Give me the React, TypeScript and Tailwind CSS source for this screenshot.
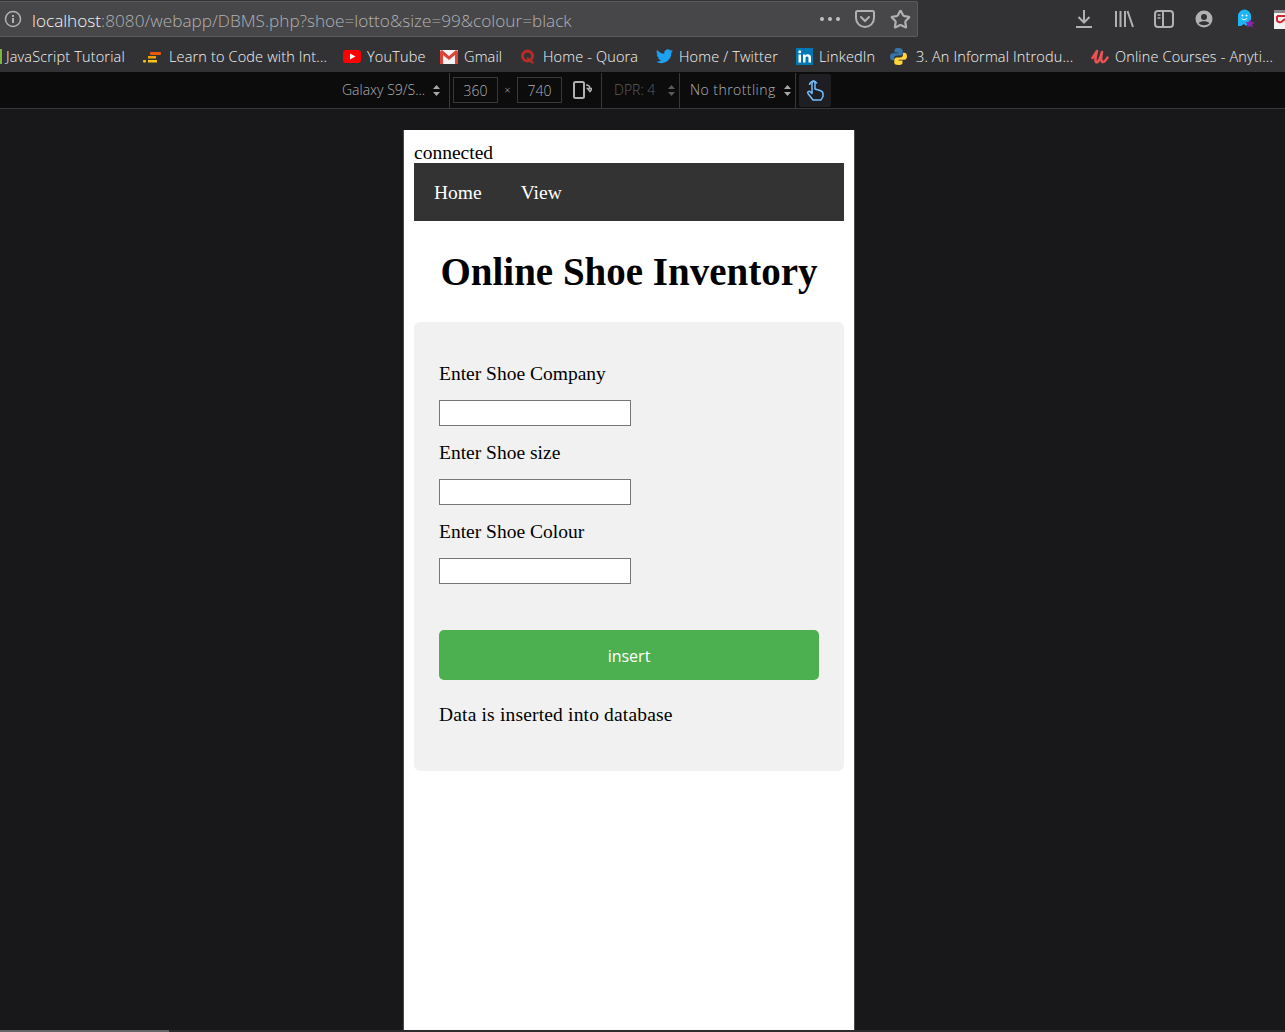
import { Star } from "lucide-react";

const uiFont = "font-['Open_Sans','Noto_Sans',sans-serif]";

const Stepper = ({ dim = false }: { dim?: boolean }) => (
  <svg width="7" height="11" viewBox="0 0 7 11" className={`shrink-0 ${dim ? "text-[#5a5a5c]" : "text-[#a8a8aa]"}`}>
    <path d="M3.500 0 7 4H0z M3.500 11 0 7h7z" fill="currentColor" />
  </svg>
);

const Favicon = ({ name }: { name: string }) => {
  if (name === "code")
    return (
      <svg width="18" height="12" viewBox="0 0 18 12">
        <rect x="7" y="1" width="11" height="3" rx="1" fill="#e8590c" />
        <rect x="5" y="5" width="8" height="2.500" fill="#f59f00" />
        <rect x="5" y="9" width="9" height="2.500" fill="#fcc419" />
        <rect x="0" y="9" width="3" height="2.500" rx="1" fill="#fcc419" />
      </svg>
    );
  if (name === "youtube")
    return (
      <svg width="18" height="13" viewBox="0 0 18 13">
        <rect width="18" height="13" rx="3" fill="#ff0000" />
        <path d="M7 3.500 12.500 6.500 7 9.500z" fill="#fff" />
      </svg>
    );
  if (name === "gmail")
    return (
      <svg width="18" height="14" viewBox="0 0 18 14">
        <rect width="18" height="14" rx="1" fill="#f3f3f3" />
        <path d="M0 1.500V14h3V5l6 5 6-5v9h3V1.500L16 0 9 6 2 0z" fill="#db4437" />
      </svg>
    );
  if (name === "quora")
    return (
      <svg width="16" height="16" viewBox="0 0 16 16">
        <circle cx="7.500" cy="7" r="5" fill="none" stroke="#b92b27" strokeWidth="3" />
        <path d="M7 9c2 0 3 4 6.500 5" fill="none" stroke="#b92b27" strokeWidth="2" />
      </svg>
    );
  if (name === "twitter")
    return (
      <svg width="17" height="15" viewBox="0 0 24 20">
        <path
          d="M24 2.400a9.800 9.800 0 0 1-2.800.8A4.900 4.900 0 0 0 23.300.5a9.800 9.800 0 0 1-3.100 1.200 4.900 4.900 0 0 0-8.400 4.500A14 14 0 0 1 1.700.9a4.900 4.900 0 0 0 1.500 6.600 4.900 4.900 0 0 1-2.200-.6 4.900 4.900 0 0 0 3.900 4.800 4.900 4.900 0 0 1-2.200.1 4.900 4.900 0 0 0 4.600 3.400A9.900 9.900 0 0 1 0 17.200 14 14 0 0 0 21.500 4.800 10 10 0 0 0 24 2.400z"
          fill="#1da1f2"
        />
      </svg>
    );
  if (name === "linkedin")
    return (
      <svg width="17" height="17" viewBox="0 0 17 17">
        <rect width="17" height="17" fill="#0077b5" />
        <rect x="2.500" y="6.500" width="2.500" height="8" fill="#fff" />
        <circle cx="3.700" cy="3.800" r="1.500" fill="#fff" />
        <path d="M7 6.500h2.400v1.200c1.200-2 5.600-2 5.600 1.800v5h-2.500v-4.500c0-2-3-2-3 0v4.500H7z" fill="#fff" />
      </svg>
    );
  if (name === "python")
    return (
      <svg width="19" height="19" viewBox="0 0 19 19">
        <path d="M9.300 1C6 1 5.500 2.300 5.500 3.500V5.500H9.500V6.300H3.500C2 6.300 1 7.500 1 9.700s1 3.500 2.500 3.500h1.500v-2c0-1.500 1.300-2.700 2.800-2.700h3.600c1.300 0 2.300-1 2.300-2.300V3.500C13.700 2 12.300 1 9.300 1z" fill="#3776ab" />
        <path d="M9.700 18c3.300 0 3.800-1.300 3.800-2.500v-2H9.500v-.8h6c1.500 0 2.500-1.200 2.500-3.400s-1-3.500-2.500-3.500H14v2c0 1.500-1.300 2.700-2.800 2.700H7.600c-1.300 0-2.300 1-2.300 2.300v3.200C5.300 17 6.700 18 9.700 18z" fill="#ffd43b" />
      </svg>
    );
  return (
    <svg width="18" height="16" viewBox="0 0 18 16">
      <path
        d="M1.500 9C3 7 4.500 4 6 2 5 6 3.500 11 5 13c2 1.500 4.500-4 6-10-.8 4-1.500 9 .5 10 2 .6 3.500-2 5-4.500"
        fill="none"
        stroke="#ec5252"
        strokeWidth="2.600"
        strokeLinecap="round"
        strokeLinejoin="round"
      />
    </svg>
  );
};

const bookmarks = [
  { icon: "code", label: "Learn to Code with Int...", w: "w-[200px]", iconW: "w-[26px]" },
  { icon: "youtube", label: "YouTube", w: "w-[97px]", iconW: "w-[24px]" },
  { icon: "gmail", label: "Gmail", w: "w-[80px]", iconW: "w-[24px]" },
  { icon: "quora", label: "Home - Quora", w: "w-[136px]", iconW: "w-[23px]" },
  { icon: "twitter", label: "Home / Twitter", w: "w-[140px]", iconW: "w-[23px]" },
  { icon: "linkedin", label: "LinkedIn", w: "w-[93px]", iconW: "w-[23px]" },
  { icon: "python", label: "3. An Informal Introdu...", w: "w-[202px]", iconW: "w-[27px]" },
  { icon: "udemy", label: "Online Courses - Anyti...", w: "w-[195px]", iconW: "w-[24px]" }
];

const BrowserChrome = () => (
  <div className={uiFont}>
    {/* Address bar row */}
    <div className="h-[37px] bg-[#323234] flex items-start pt-px">
      <div className="w-[918px] h-9 shrink-0 bg-[#474749] border border-l-0 border-[#5a5a5c] rounded-r-[2px] flex items-center justify-between pl-[4px] pr-[6px]">
        <div className="flex items-center">
          <svg width="18" height="18" viewBox="0 0 18 18" className="text-[#b1b1b3]">
            <circle cx="9" cy="9" r="7.500" fill="none" stroke="currentColor" strokeWidth="1.500" />
            <rect x="8" y="8" width="2" height="5" fill="currentColor" />
            <rect x="8" y="5" width="2" height="2" fill="currentColor" />
          </svg>
          <div className="ml-[10px] pt-[4px] text-[17.2px] font-light text-[#b1b1b3] whitespace-nowrap">
            <span className="text-[#f4f4f4]">localhost</span>:8080/webapp/DBMS.php?shoe=lotto&amp;size=99&amp;colour=black
          </div>
        </div>
        <div className="flex items-center">
          <svg width="20" height="4" viewBox="0 0 20 4" className="text-[#c0c0c2]">
            <circle cx="2" cy="2" r="2" fill="currentColor" />
            <circle cx="10" cy="2" r="2" fill="currentColor" />
            <circle cx="18" cy="2" r="2" fill="currentColor" />
          </svg>
          <svg width="20" height="18" viewBox="0 0 20 18" className="ml-[15px] text-[#b1b1b3]">
            <path d="M2.500 1h15A1.500 1.500 0 0 1 19 2.500V8A9 9 0 0 1 1 8V2.500A1.500 1.500 0 0 1 2.500 1z" fill="none" stroke="currentColor" strokeWidth="2" />
            <path d="M6 7l4 4 4-4" fill="none" stroke="currentColor" strokeWidth="2" strokeLinecap="round" />
          </svg>
          <Star className="ml-[15px] text-[#b1b1b3]" size={21} strokeWidth={2.500} />
        </div>
      </div>
      <div className="flex items-center h-9 overflow-hidden flex-1">
        <svg width="18" height="20" viewBox="0 0 18 20" className="ml-[157px] text-[#b1b1b3] shrink-0">
          <path d="M9 1v12M3.500 8 9 13.500 14.500 8" fill="none" stroke="currentColor" strokeWidth="2" />
          <rect x="1" y="17" width="16" height="2" fill="currentColor" />
        </svg>
        <svg width="20" height="18" viewBox="0 0 20 18" className="ml-[21px] text-[#b1b1b3] shrink-0">
          <path d="M2 1v16M6.500 1v16M11 1v16M13.500 1 19 17" fill="none" stroke="currentColor" strokeWidth="2" />
        </svg>
        <svg width="20" height="18" viewBox="0 0 20 18" className="ml-[20px] text-[#b1b1b3] shrink-0">
          <rect x="1" y="1" width="18" height="16" rx="3" fill="none" stroke="currentColor" strokeWidth="2" />
          <path d="M9 1v16" stroke="currentColor" strokeWidth="2" />
          <path d="M3.500 5h3M3.500 8h3" stroke="currentColor" strokeWidth="1.500" />
        </svg>
        <svg width="18" height="18" viewBox="0 0 18 18" className="ml-[21px] text-[#b1b1b3] shrink-0">
          <circle cx="9" cy="9" r="8.500" fill="currentColor" />
          <circle cx="9" cy="7" r="3" fill="#323234" />
          <path d="M3.500 13c3-2.500 8-2.500 11 0-3 3-8 3-11 0z" fill="#323234" />
        </svg>
        <svg width="18" height="20" viewBox="0 0 18 20" className="ml-[24px] shrink-0">
          <path d="M1 17V7a6.500 6.500 0 0 1 13 0v10l-3-2-2 2-2-2-3 2-3 0z" fill="#1cb5f5" />
          <circle cx="5.500" cy="6.500" r="1" fill="#fff" />
          <circle cx="9.500" cy="6.500" r="1" fill="#fff" />
          <path d="M4.500 9.500c1.500 1.500 4 1.500 5.500 0" fill="none" stroke="#fff" />
          <path d="M13 10l1.400 3 3.300.3-2.500 2.200.8 3.300-3-1.800-3 1.800.8-3.300-2.500-2.200 3.300-.3z" fill="#8e24aa" />
        </svg>
        <svg width="11" height="19" viewBox="0 0 11 19" className="ml-[19px] shrink-0">
          <rect width="11" height="19" fill="#f2f2f2" />
          <rect y="0" width="11" height="3" fill="#8a8a8c" />
          <path d="M3 6v4c0 2 3 3 5 1.500L11 9M3 6h8" fill="none" stroke="#d9232d" strokeWidth="2" />
        </svg>
      </div>
    </div>

    {/* Bookmarks row */}
    <div className="h-[35px] bg-[#323234] flex items-center text-[14.5px] tracking-[0.15px] font-light text-[#f4f4f4] whitespace-nowrap overflow-hidden pt-[4px]">
      <div className="w-[2px] h-[15px] bg-[#7cb342] shrink-0" />
      <span className="ml-1 w-[137px] shrink-0">JavaScript Tutorial</span>
      {bookmarks.map((b) => (
        <div key={b.label} className={`flex items-center shrink-0 ${b.w}`}>
          <span className={`${b.iconW} shrink-0 flex items-center`}>
            <Favicon name={b.icon} />
          </span>
          <span>{b.label}</span>
        </div>
      ))}
    </div>

    {/* Responsive design toolbar */}
    <div className="h-[37px] bg-[#0c0c0d] border-b border-[#38383a] flex items-center text-[14px] font-light text-[#b1b1b3] pl-[342px]">
      <span className="w-[91px] whitespace-nowrap pb-[2px]">Galaxy S9/S...</span>
      <Stepper />
      <div className="w-px h-[35px] bg-[#38383a] ml-[9px]" />
      <div className="w-[45px] h-[26px] ml-[3px] border border-[#38383a] flex items-center justify-center">360</div>
      <span className="w-[19px] text-center text-[11px]">×</span>
      <div className="w-[45px] h-[26px] border border-[#38383a] flex items-center justify-center">740</div>
      <svg width="19" height="18" viewBox="0 0 19 18" className="ml-[11px] text-[#b1b1b3] shrink-0">
        <rect x="1" y="1" width="10" height="16" rx="1.500" fill="none" stroke="currentColor" strokeWidth="2" />
        <path d="M13 4c3 0 4 1.500 4 4M14.500 7.500h5L17 10.500z" fill="none" stroke="currentColor" strokeWidth="1.500" />
      </svg>
      <div className="w-px h-[35px] bg-[#38383a] ml-[9px]" />
      <span className="ml-[12px] w-[54px] text-[#5f5f61] pb-[2px]">DPR: 4</span>
      <Stepper dim />
      <div className="w-px h-[35px] bg-[#38383a] ml-[4px]" />
      <span className="ml-[10px] w-[94px] whitespace-nowrap tracking-[0.45px] pb-[2px]">No throttling</span>
      <Stepper />
      <div className="w-px h-[35px] bg-[#38383a] ml-[4px]" />
      <div className="w-8 h-[33px] ml-[3px] rounded-[2px] bg-[#1e1e23] flex items-center justify-center">
        <svg width="18" height="22" viewBox="0 0 18 22" className="text-[#75bfff]">
          <path
            d="M6 9V3.500a1.500 1.500 0 0 1 3 0V10l5 1.500c2 .6 3 1.500 3 3.500v2.500L15 21H7L2 14.500c-1-1.500.8-3 2.200-1.800L6 14.500z"
            fill="none"
            stroke="currentColor"
            strokeWidth="1.500"
            strokeLinejoin="round"
          />
          <path d="M3.500 6a4 4 0 0 1 7.500-1.500" fill="none" stroke="currentColor" strokeWidth="1.500" />
        </svg>
      </div>
    </div>
  </div>
);

const fields = ["Enter Shoe Company", "Enter Shoe size", "Enter Shoe Colour"];

const ShoeForm = () => (
  <div className="w-[450px] h-[900px] bg-white p-[10px] pt-[12px] font-['Liberation_Serif',serif] text-[19.5px] leading-[21px] text-black">
    <div>connected</div>
    <nav className="h-[58px] bg-[#333333] flex items-center pl-5 gap-[39px] text-white">
      <span>Home</span>
      <span>View</span>
    </nav>
    <h1 className="text-center text-[39px] font-bold leading-[46px] mt-[28px] mb-[27px]">Online Shoe Inventory</h1>
    <div className="h-[449px] bg-[#f1f1f1] rounded-[6px] pt-[41px] px-[25px]">
      {fields.map((label) => (
        <div key={label} className="h-[79px]">
          <label className="block">{label}</label>
          <input
            type="text"
            className="block mt-[16px] w-[192px] h-[26px] bg-white border border-[#767676]"
          />
        </div>
      ))}
      <button className={`mt-[30px] w-[380px] h-[50px] pt-[2px] bg-[#4caf50] text-white rounded-[5px] text-[16px] ${uiFont}`}>
        insert
      </button>
      <p className="mt-[24px] tracking-[0.17px]">Data is inserted into database</p>
    </div>
  </div>
);

export default function App() {
  return (
    <div className="w-[1285px] h-[1032px] overflow-hidden bg-[#18181a] relative">
      <BrowserChrome />
      <div className="pt-[21px] pl-[403px]">
        <div className="w-[452px] border-x border-[#4a4a4f]">
          <ShoeForm />
        </div>
      </div>
      {/* scrollbar of the devtools viewport */}
      <div className="absolute bottom-0 left-0 right-0 h-[2px] flex">
        <div className="w-[169px] bg-[#666668]" />
        <div className="flex-1 bg-[#2b2b2d]" />
      </div>
    </div>
  );
}
